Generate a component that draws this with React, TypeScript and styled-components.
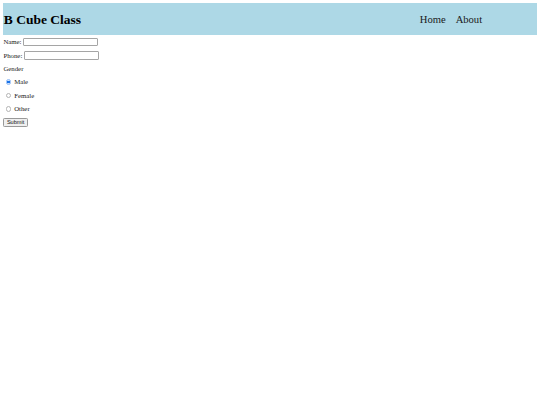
import styled, { createGlobalStyle } from "styled-components";

const GlobalStyle = createGlobalStyle`
  body {
    margin: 3.4px;
    font-family: "Liberation Serif", "Times New Roman", serif;
    background: #ffffff;
    color: #000000;
  }
`;

const Header = styled.header`
  display: flex;
  align-items: center;
  justify-content: space-between;
  height: 32px;
  background-color: #add8e6;
`;

const Title = styled.h1`
  margin: 0 0 0 0.4px;
  font-size: 13.5px;
  font-weight: bold;
  line-height: 1;
`;

const NavList = styled.ul`
  display: flex;
  gap: 10px;
  margin: 0 54.5px 0 0;
  padding: 0;
  list-style: none;
`;

const NavItem = styled.li`
  font-size: 10.6px;
  color: #1a1a1a;
`;

const Form = styled.form`
  display: flex;
  flex-direction: column;
  align-items: flex-start;
  padding-top: 2px;
  font-size: 6.8px;
  color: #222;
`;

const Row = styled.div<{ $gap?: number }>`
  display: flex;
  align-items: center;
  height: 9px;
  margin-bottom: ${(p) => p.$gap ?? 4.5}px;
`;

const Label = styled.label`
  margin-right: 1.5px;
`;

const TextInput = styled.input`
  box-sizing: border-box;
  width: 75px;
  height: 8.6px;
  padding: 0;
  border: 0.6px solid #a5a5a5;
  border-radius: 1px;
  font-size: 5.6px;
`;

const Radio = styled.input`
  appearance: none;
  box-sizing: border-box;
  width: 5.4px;
  height: 5.4px;
  margin: 0 3px 0 2.4px;
  border: 0.4px solid #b4b4b4;
  border-radius: 50%;
  background: #fff;

  &:checked {
    border-color: #8fbaf5;
    background: radial-gradient(circle, #1a73e8 0 45%, #cfe2fb 60% 100%);
  }
`;

const SubmitButton = styled.button`
  box-sizing: border-box;
  height: 9px;
  padding: 0 2.5px;
  font-family: "Liberation Sans", Arial, sans-serif;
  font-size: 5.6px;
  line-height: 1;
  background-color: #efefef;
  border: 0.6px solid #999;
  border-radius: 1.3px;
  color: #111;
`;

const App = () => {
  return (
    <>
      <GlobalStyle />
      <Header>
        <Title>B Cube Class</Title>
        <NavList>
          <NavItem>Home</NavItem>
          <NavItem>About</NavItem>
        </NavList>
      </Header>
      <Form onSubmit={(e) => e.preventDefault()}>
        <Row>
          <Label htmlFor="name">Name:</Label>
          <TextInput id="name" type="text" />
        </Row>
        <Row $gap={4}>
          <Label htmlFor="phone">Phone:</Label>
          <TextInput id="phone" type="text" />
        </Row>
        <Row>
          <span>Gender</span>
        </Row>
        <Row>
          <Radio type="radio" id="male" name="gender" defaultChecked />
          <label htmlFor="male">Male</label>
        </Row>
        <Row>
          <Radio type="radio" id="female" name="gender" />
          <label htmlFor="female">Female</label>
        </Row>
        <Row>
          <Radio type="radio" id="other" name="gender" />
          <label htmlFor="other">Other</label>
        </Row>
        <SubmitButton type="submit">Submit</SubmitButton>
      </Form>
    </>
  );
};

export default App;
